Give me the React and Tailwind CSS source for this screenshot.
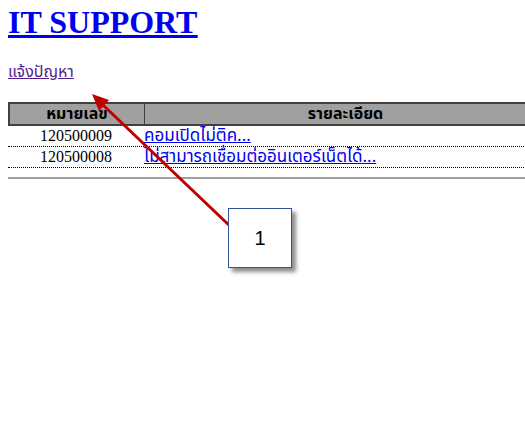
export default function App() {
  const thai = { fontFamily: "Tahoma, 'Noto Sans Thai', 'Noto Sans', 'DejaVu Sans', sans-serif" };
  return (
    <div className="relative w-[525px] h-[442px] overflow-hidden bg-white">
      <div className="px-2 pt-1">
        <h1 className="text-[32px] leading-[37px] font-bold text-[#0000ee] underline" style={{ fontFamily: "'Liberation Serif', serif" }}>
          <a href="#">IT SUPPORT</a>
        </h1>
        <div className="mt-[21px] h-[20px] text-[16px] leading-[20px]" style={thai}>
          <a href="#" className="text-[#551a8b] underline">แจ้งปัญหา</a>
        </div>
        <div className="mt-[20px] w-[540px]">
          <div className="flex h-[24px] border-2 border-[#404040] bg-[#a0a0a0] text-[16px] font-bold text-black" style={thai}>
            <div className="w-[135px] flex items-center justify-center border-r border-[#404040] leading-none">หมายเลข</div>
            <div className="flex-1 flex items-center justify-center leading-none">รายละเอียด</div>
          </div>
          <div className="flex h-[21px] border-b border-dotted border-black items-end">
            <div className="w-[136px] text-center text-[16px] leading-[20px]" style={{ fontFamily: "'Liberation Serif', serif" }}>120500009</div>
            <div className="flex-1 text-[17px] leading-[20px]" style={thai}>
              <a href="#" className="text-[#0000ee] underline">คอมเปิดไม่ติค...</a>
            </div>
          </div>
          <div className="flex h-[21px] border-b border-dotted border-black items-end">
            <div className="w-[136px] text-center text-[16px] leading-[20px]" style={{ fontFamily: "'Liberation Serif', serif" }}>120500008</div>
            <div className="flex-1 text-[17px] leading-[20px]" style={thai}>
              <a href="#" className="text-[#0000ee] underline">ไม่สามารถเชื่อมต่ออินเตอร์เน็ตได้...</a>
            </div>
          </div>
          <div className="mt-[9px] border-t-2 border-[#a0a0a0]"></div>
        </div>
      </div>

      <svg className="absolute inset-0 pointer-events-none" width="525" height="442" viewBox="0 0 525 442">
        <line x1="232" y1="228" x2="103" y2="105" stroke="#c00000" strokeWidth="3" />
        <polygon points="92,94 109,100 99,111" fill="#c00000" />
      </svg>

      <div
        className="absolute left-[228px] top-[208px] w-[64px] h-[60px] bg-white border border-[#2f5597] flex items-center justify-center text-[20px] text-black shadow-[4px_4px_4px_rgba(0,0,0,0.45)]"
        style={{ fontFamily: "'Liberation Sans', sans-serif" }}
      >
        1
      </div>
    </div>
  );
}
